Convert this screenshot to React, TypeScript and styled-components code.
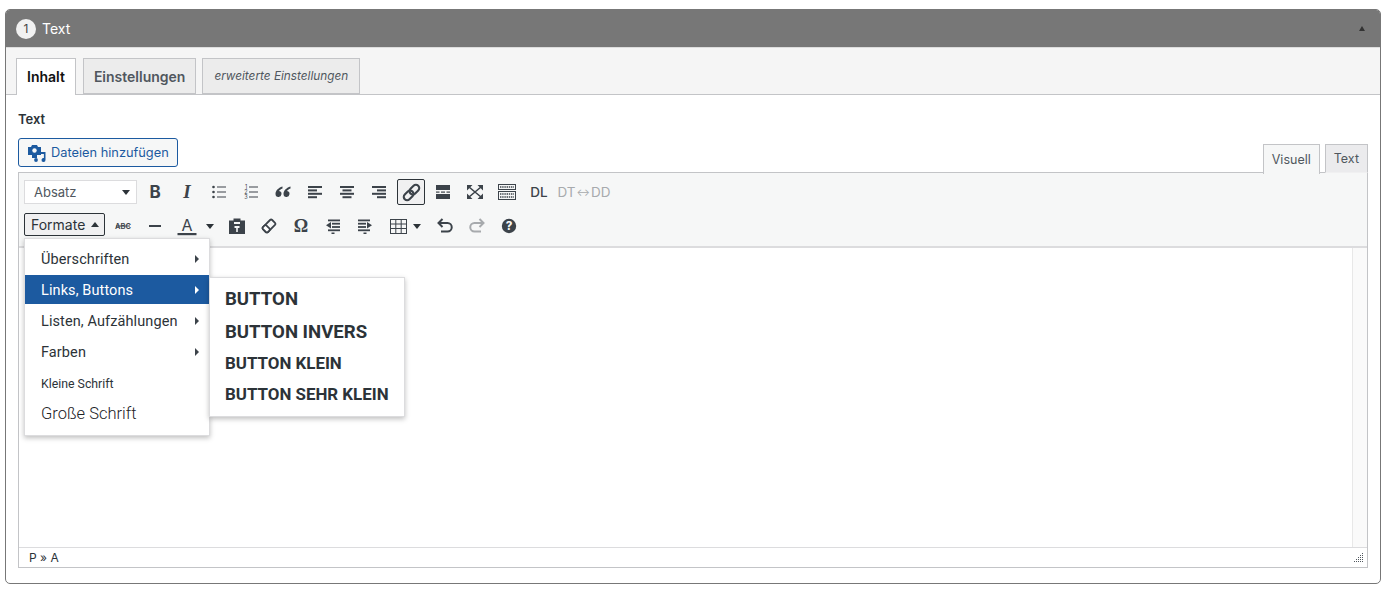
import React from "react";
import styled, { createGlobalStyle } from "styled-components";

const UI = `Inter, "Liberation Sans", sans-serif`;
const MENU = `Roboto, "Liberation Sans", sans-serif`;

const Global = createGlobalStyle`
  html, body { margin: 0; padding: 0; background: #fff; }
  body { font-family: ${UI}; color: #2c3338; }
  * { box-sizing: border-box; }
`;

const Page = styled.div`
  width: 1389px;
  height: 591px;
  padding: 9px 8px 0 5px;
  overflow: hidden;
`;
const Box = styled.section`
  height: 575px;
  border: 1px solid #777;
  border-radius: 5px;
  overflow: hidden;
  display: flex;
  flex-direction: column;
`;
const Header = styled.header`
  height: 37px;
  flex: none;
  background: #777;
  display: flex;
  align-items: center;
  padding: 0 15px 0 10px;
  color: #fff;
  font-size: 14px;
  gap: 6px;
`;
const Badge = styled.span`
  width: 20px;
  height: 20px;
  border-radius: 50%;
  background: #f1f1f1;
  color: #444;
  font-size: 12px;
  display: flex;
  align-items: center;
  justify-content: center;
`;
const HeaderTitle = styled.span`
  flex: 1;
`;
const CollapseArrow = styled.span`
  width: 0;
  height: 0;
  border-left: 3px solid transparent;
  border-right: 3px solid transparent;
  border-bottom: 5px solid #333;
`;
const TabStrip = styled.nav`
  height: 48px;
  flex: none;
  background: #f5f5f5;
  border-top: 1px solid #ddd;
  border-bottom: 1px solid #c3c4c7;
  padding: 10px 0 0 10px;
  display: flex;
  gap: 6px;
`;
const MainTab = styled.div<{ $active?: boolean; $minor?: boolean }>`
  height: ${(p) => (p.$active ? 37 : 36)}px;
  margin-right: ${(p) => (p.$active ? 1 : 0)}px;
  padding: 0 ${(p) => (p.$minor ? 11 : 10)}px ${(p) => (p.$active ? 2 : 0)}px;
  border: 1px solid #c3c4c7;
  border-bottom: ${(p) => (p.$active ? "none" : "1px solid #c3c4c7")};
  background: ${(p) => (p.$active ? "#fff" : "#ececec")};
  color: ${(p) => (p.$active ? "#111" : "#50575e")};
  display: flex;
  align-items: center;
  font-size: ${(p) => (p.$minor ? 11.8 : 14)}px;
  font-weight: ${(p) => (p.$minor ? 400 : 600)};
  font-style: ${(p) => (p.$minor ? "italic" : "normal")};
  position: relative;
`;
const Content = styled.div`
  flex: 1;
  padding: 0 12px;
  display: flex;
  flex-direction: column;
`;
const FieldLabel = styled.div`
  font-size: 13px;
  font-weight: 600;
  line-height: 16px;
  margin-top: 16px;
`;
const EditorTop = styled.div`
  height: 34px;
  margin-top: 11px;
  display: flex;
  align-items: flex-start;
  justify-content: space-between;
  position: relative;
  z-index: 2;
`;
const MediaButton = styled.button`
  width: 160px;
  height: 29px;
  margin: 0;
  border: 1px solid #1c5aa0;
  border-radius: 3px;
  background: #f6f7f7;
  color: #1c5aa0;
  font: 12.8px ${UI};
  display: flex;
  align-items: center;
  gap: 4px;
  padding: 0 0 0 8px;
`;
const ModeTabs = styled.div`
  display: flex;
  gap: 5px;
  margin-top: 6px;
`;
const ModeTab = styled.div<{ $active?: boolean }>`
  height: ${(p) => (p.$active ? 30 : 29)}px;
  padding: 0 8px;
  border: 1px solid #c3c4c7;
  border-bottom: ${(p) => (p.$active ? "none" : "1px solid #f0f0f1")};
  background: ${(p) => (p.$active ? "#f6f7f7" : "#ebebed")};
  color: #50575e;
  font-size: 12.5px;
  display: flex;
  align-items: center;
`;
const Editor = styled.div`
  height: 396px;
  border: 1px solid #c3c4c7;
  display: flex;
  flex-direction: column;
  position: relative;
`;
const Toolbar = styled.div`
  height: 75px;
  flex: none;
  background: #f6f7f7;
  border-bottom: 2px solid #dcdcde;
  padding: 5px 0 0 5px;
  display: flex;
  flex-direction: column;
  gap: 6px;
`;
const ToolRow = styled.div`
  height: 28px;
  display: flex;
  align-items: center;
  gap: 4px;
`;
const SelectBox = styled.div`
  width: 113px;
  height: 24px;
  background: #fff;
  border: 1px solid #dcdcde;
  display: flex;
  align-items: center;
  justify-content: space-between;
  padding: 0 6px 0 9px;
  font-size: 13px;
  color: #50575e;
`;
const Caret = styled.span<{ $up?: boolean; $size?: number }>`
  width: 0;
  height: 0;
  border-left: ${(p) => p.$size ?? 4}px solid transparent;
  border-right: ${(p) => p.$size ?? 4}px solid transparent;
  ${(p) => (p.$up ? "border-bottom" : "border-top")}: ${(p) => (p.$size ?? 4) + 1}px solid #2c3338;
`;
const FormatButton = styled.div`
  width: 81px;
  height: 23px;
  align-self: flex-start;
  margin-top: 1px;
  border: 1px solid #2c3338;
  border-radius: 2px;
  background: #f0f0f1;
  display: flex;
  align-items: center;
  gap: 6px;
  padding-left: 6px;
  font-size: 14px;
  color: #2c3338;
`;
const ToolButton = styled.div<{ $w?: number; $active?: boolean; $off?: boolean }>`
  width: ${(p) => p.$w ?? 28}px;
  height: 26px;
  flex: none;
  display: flex;
  align-items: center;
  justify-content: center;
  color: ${(p) => (p.$off ? "#a7aaad" : "#3c434a")};
  border: 1px solid ${(p) => (p.$active ? "#2c3338" : "transparent")};
  border-radius: 2px;
  background: ${(p) => (p.$active ? "#f0f0f1" : "transparent")};
  gap: 6px;
`;
const CaretSlot = styled.div`
  width: 14px;
  height: 26px;
  flex: none;
  display: flex;
  align-items: center;
  padding-left: 1px;
`;
const GlyphB = styled.span`
  font: 700 17px ${UI};
`;
const GlyphI = styled.span`
  font: italic 700 19px "Liberation Serif", serif;
`;
const GlyphTxt = styled.span<{ $off?: boolean }>`
  font: ${(p) => (p.$off ? "400 13.5px" : "500 13.5px")} ${UI};
  white-space: nowrap;
  display: flex;
  align-items: center;
`;
const GlyphArrow = styled.span`
  font-size: 10px;
  margin: 0 1px;
`;
const GlyphOmega = styled.span`
  font: 700 18px "Liberation Serif", serif;
`;
const EditArea = styled.div`
  flex: 1;
  display: flex;
  justify-content: flex-end;
  background: #fff;
`;
const ScrollTrack = styled.div`
  width: 15px;
  background: #fafafa;
  border-left: 1px solid #e8e8e8;
`;
const StatusBar = styled.div`
  height: 20px;
  flex: none;
  border-top: 1px solid #dcdcde;
  display: flex;
  align-items: center;
  justify-content: space-between;
  padding: 0 2px 0 10px;
  font-size: 12px;
  color: #2c3338;
`;
const Menu = styled.div`
  position: absolute;
  left: 5px;
  top: 65px;
  width: 186px;
  height: 198px;
  background: #fff;
  border: 1px solid #dcdcde;
  box-shadow: 0 2px 5px rgba(0, 0, 0, 0.25);
  padding-top: 5px;
  display: flex;
  flex-direction: column;
  font-family: ${MENU};
  z-index: 5;
`;
const MenuRow = styled.div<{ $active?: boolean }>`
  height: 29px;
  margin-bottom: 2px;
  flex: none;
  display: flex;
  align-items: center;
  justify-content: space-between;
  padding: 2px 10px 0 16px;
  font-size: 14.5px;
  letter-spacing: 0.1px;
  color: ${(p) => (p.$active ? "#fff" : "#2c3338")};
  background: ${(p) => (p.$active ? "#1c5aa0" : "transparent")};
`;
const SmallRow = styled.div`
  height: 29px;
  margin-bottom: 1px;
  display: flex;
  align-items: center;
  padding: 2px 0 0 16px;
  font-size: 12.3px;
  color: #2c3338;
`;
const LargeRow = styled.div`
  height: 29px;
  display: flex;
  align-items: center;
  padding: 2px 0 0 16px;
  font-size: 16.5px;
  font-weight: 300;
  color: #1d2327;
`;
const SideArrow = styled.span<{ $light?: boolean }>`
  width: 0;
  height: 0;
  margin-top: -2px;
  border-top: 4px solid transparent;
  border-bottom: 4px solid transparent;
  border-left: 4px solid ${(p) => (p.$light ? "#fff" : "#3c434a")};
`;
const SubMenu = styled.div`
  position: absolute;
  left: 184px;
  top: 38px;
  width: 196px;
  height: 140px;
  background: #fff;
  border: 1px solid #dcdcde;
  box-shadow: 0 2px 5px rgba(0, 0, 0, 0.25);
  padding: 5px 0 0 15px;
  display: flex;
  flex-direction: column;
  font-family: ${MENU};
  font-weight: 700;
  color: #2c3338;
`;
const SubItem = styled.div<{ $size: number; $h: number }>`
  height: ${(p) => p.$h}px;
  display: flex;
  align-items: center;
  font-size: ${(p) => p.$size}px;
  white-space: nowrap;
`;

const Ico = ({ children, w = 20, h = 20 }: { children: React.ReactNode; w?: number; h?: number }) => (
  <svg width={w} height={h} viewBox={`0 0 ${w} ${h}`} fill="currentColor" stroke="none">
    {children}
  </svg>
);

const Lines = ({ rows }: { rows: [number, number][] }) => (
  <Ico>
    {rows.map(([x, w], i) => (
      <rect key={i} x={x} y={4 + i * 3.4} width={w} height={2} />
    ))}
  </Ico>
);

const ListIcon = ({ ordered }: { ordered?: boolean }) => (
  <Ico>
    {[5, 10, 15].map((y) => (
      <rect key={y} x={8} y={y - 0.5} width={9} height={1} />
    ))}
    {[5, 10, 15].map((y, i) =>
      ordered ? (
        <text key={y} x={5} y={y + 2} textAnchor="middle" fontSize="5.5" fontFamily="Inter, sans-serif">
          {i + 1}
        </text>
      ) : (
        <circle key={y} cx={4.5} cy={y} r={1.3} />
      )
    )}
  </Ico>
);

const IndentRows = ({ left }: { left: boolean }) => (
  <Ico>
    <rect x={left ? 5 : 3} y="3.5" width="12" height="1.8" />
    <rect x={left ? 9 : 3} y="6.8" width="8" height="1.8" />
    <rect x={left ? 9 : 3} y="10.1" width="8" height="1.8" />
    <rect x={left ? 5 : 3} y="13.4" width="12" height="1.8" />
    <rect x="8.5" y="16.5" width="3" height="1.5" />
    <path d={left ? "M3 9.3 8 6v6.6z" : "M17 9.3 12 6v6.6z"} />
  </Ico>
);

const App = () => (
  <Page>
    <Global />
    <Box>
      <Header>
        <Badge>1</Badge>
        <HeaderTitle>Text</HeaderTitle>
        <CollapseArrow />
      </Header>
      <TabStrip>
        <MainTab $active>Inhalt</MainTab>
        <MainTab>Einstellungen</MainTab>
        <MainTab $minor>erweiterte Einstellungen</MainTab>
      </TabStrip>
      <Content>
        <FieldLabel>Text</FieldLabel>
        <EditorTop>
          <MediaButton>
            <svg width="20" height="20" viewBox="0 0 20 20" fill="#1c5aa0">
              <path d="M1 4h3l1-2h5l1 2h3v8h-4v3H5v-3H1z" />
              <circle cx="7.5" cy="7.5" r="2.2" fill="#f6f7f7" />
              <path d="M14 9h4.5v8a2 2 0 1 1-1.6-1.9V11H14z" />
              <circle cx="9" cy="17" r="1.9" />
            </svg>
            Dateien hinzufügen
          </MediaButton>
          <ModeTabs>
            <ModeTab $active>Visuell</ModeTab>
            <ModeTab>Text</ModeTab>
          </ModeTabs>
        </EditorTop>
        <Editor>
          <Toolbar>
            <ToolRow>
              <SelectBox>
                Absatz
                <Caret />
              </SelectBox>
              <ToolButton><GlyphB>B</GlyphB></ToolButton>
              <ToolButton><GlyphI>I</GlyphI></ToolButton>
              <ToolButton><ListIcon /></ToolButton>
              <ToolButton><ListIcon ordered /></ToolButton>
              <ToolButton>
                <Ico>
                  <path d="M9.5 4.5C5 6 2.5 8.8 2.5 12a3 3 0 1 0 3.6-3c.4-1 1.6-2 3.4-2.6z" />
                  <path d="M17.5 4.5C13 6 10.5 8.8 10.5 12a3 3 0 1 0 3.6-3c.4-1 1.6-2 3.4-2.6z" />
                </Ico>
              </ToolButton>
              <ToolButton><Lines rows={[[3, 14], [3, 9], [3, 14], [3, 9]]} /></ToolButton>
              <ToolButton><Lines rows={[[3, 14], [5.5, 9], [3, 14], [5.5, 9]]} /></ToolButton>
              <ToolButton><Lines rows={[[3, 14], [8, 9], [3, 14], [8, 9]]} /></ToolButton>
              <ToolButton $active>
                <svg width="21" height="21" viewBox="0 0 22 22" fill="none" stroke="currentColor" strokeWidth="2.2">
                  <g transform="rotate(-45 11 11)">
                    <rect x="1" y="7.5" width="11.5" height="7" rx="3.5" />
                    <rect x="9.5" y="7.5" width="11.5" height="7" rx="3.5" />
                  </g>
                </svg>
              </ToolButton>
              <ToolButton>
                <Ico>
                  <rect x="3" y="3" width="14" height="5" />
                  <rect x="3" y="9.5" width="3.5" height="1.2" />
                  <rect x="8" y="9.5" width="4" height="1.2" />
                  <rect x="13.5" y="9.5" width="3.5" height="1.2" />
                  <rect x="3" y="12" width="14" height="5" />
                </Ico>
              </ToolButton>
              <ToolButton>
                <svg width="20" height="20" viewBox="0 0 20 20" fill="currentColor" stroke="none">
                  <path d="M2 3h5.5L2 8.5zM18 3v5.5L12.5 3zM2 17v-5.5L7.5 17zM18 17h-5.5l5.5-5.5z" />
                  <path d="M4 5l12 10M16 5 4 15" stroke="currentColor" strokeWidth="1.6" fill="none" />
                </svg>
              </ToolButton>
              <ToolButton>
                <svg width="20" height="20" viewBox="0 0 20 20" fill="none" stroke="currentColor">
                  <rect x="1.5" y="2.5" width="17" height="5" />
                  <rect x="1.5" y="9.5" width="17" height="8" />
                  <path d="M3 5h14M3 12h14M3 15h14" strokeWidth="1.4" strokeDasharray="1.4 .8" />
                </svg>
              </ToolButton>
              <ToolButton><GlyphTxt>DL</GlyphTxt></ToolButton>
              <ToolButton $w={54} $off>
                <GlyphTxt $off>DT<GlyphArrow>↔</GlyphArrow>DD</GlyphTxt>
              </ToolButton>
            </ToolRow>
            <ToolRow>
              <FormatButton>
                Formate
                <Caret $up />
              </FormatButton>
              <ToolButton>
                <svg width="20" height="20" viewBox="0 0 20 20">
                  <text x="10" y="12.5" textAnchor="middle" fontSize="7.5" fontWeight="600" fontFamily="Inter, sans-serif" fill="currentColor">ABC</text>
                  <rect x="3" y="9.5" width="14" height="1" fill="currentColor" />
                </svg>
              </ToolButton>
              <ToolButton><Ico><rect x="4" y="9" width="12" height="2" /></Ico></ToolButton>
              <ToolButton>
                <svg width="20" height="22" viewBox="0 0 20 22" fill="currentColor">
                  <text x="10" y="15.5" textAnchor="middle" fontSize="16" fontFamily="Inter, sans-serif">A</text>
                  <rect x="0.5" y="18" width="19" height="2.2" fill="#3c434a" />
                </svg>
              </ToolButton>
              <CaretSlot><Caret /></CaretSlot>
              <ToolButton>
                <Ico>
                  <path d="M2 4.5h4.5V2.5h7v2H18V18H2zm5 3.5h6V6H7zm.5 2v2h1.7v4h1.6v-4h1.7v-2z" fillRule="evenodd" />
                </Ico>
              </ToolButton>
              <ToolButton>
                <svg width="20" height="20" viewBox="0 0 20 20" fill="none" stroke="currentColor" strokeWidth="1.8">
                  <g transform="rotate(-45 10 10)">
                    <rect x="3.5" y="6.5" width="13" height="7" rx="1.5" />
                    <rect x="3.5" y="6.5" width="5" height="7" rx="1.5" fill="#fff" />
                  </g>
                </svg>
              </ToolButton>
              <ToolButton><GlyphOmega>Ω</GlyphOmega></ToolButton>
              <ToolButton><IndentRows left /></ToolButton>
              <ToolButton><IndentRows left={false} /></ToolButton>
              <ToolButton $w={44}>
                <svg width="17" height="15" viewBox="0 0 17 15" fill="none" stroke="currentColor">
                  <rect x="0.5" y="0.5" width="16" height="14" />
                  <path d="M0.5 5h16M0.5 9.5h16M5.8 0.5v14M11.2 0.5v14" />
                </svg>
                <Caret />
              </ToolButton>
              <ToolButton>
                <svg width="20" height="20" viewBox="0 0 20 20" fill="none" stroke="currentColor" strokeWidth="2">
                  <path d="M4 7h8.5a4 4 0 0 1 0 8.5H6" />
                  <path d="M7.5 3 3.5 7l4 4" />
                </svg>
              </ToolButton>
              <ToolButton $off>
                <svg width="20" height="20" viewBox="0 0 20 20" fill="none" stroke="currentColor" strokeWidth="2">
                  <path d="M16 7H7.5a4 4 0 0 0 0 8.5H14" />
                  <path d="M12.5 3l4 4-4 4" />
                </svg>
              </ToolButton>
              <ToolButton>
                <Ico>
                  <circle cx="10" cy="10" r="7.2" />
                  <text x="10" y="14" textAnchor="middle" fontSize="11.5" fontWeight="800" fontFamily="Inter, sans-serif" fill="#f6f7f7">?</text>
                </Ico>
              </ToolButton>
            </ToolRow>
          </Toolbar>
          <EditArea><ScrollTrack /></EditArea>
          <StatusBar>
            P » A
            <svg width="12" height="12" viewBox="0 0 12 12" fill="#50575e">
              {[[9, 1], [7, 3], [9, 3], [5, 5], [7, 5], [9, 5], [3, 7], [5, 7], [7, 7], [9, 7], [1, 9], [3, 9], [5, 9], [7, 9], [9, 9]].map(([x, y]) => (
                <rect key={`${x}-${y}`} x={x} y={y} width="1" height="1" />
              ))}
            </svg>
          </StatusBar>
          <Menu>
            <MenuRow>Überschriften<SideArrow /></MenuRow>
            <MenuRow $active>Links, Buttons<SideArrow $light /></MenuRow>
            <MenuRow>Listen, Aufzählungen<SideArrow /></MenuRow>
            <MenuRow>Farben<SideArrow /></MenuRow>
            <SmallRow>Kleine Schrift</SmallRow>
            <LargeRow>Große Schrift</LargeRow>
            <SubMenu>
              <SubItem $size={18.6} $h={31}>BUTTON</SubItem>
              <SubItem $size={18.6} $h={35}>BUTTON INVERS</SubItem>
              <SubItem $size={16.9} $h={28}>BUTTON KLEIN</SubItem>
              <SubItem $size={16.9} $h={33}>BUTTON SEHR KLEIN</SubItem>
            </SubMenu>
          </Menu>
        </Editor>
      </Content>
    </Box>
  </Page>
);

export default App;
